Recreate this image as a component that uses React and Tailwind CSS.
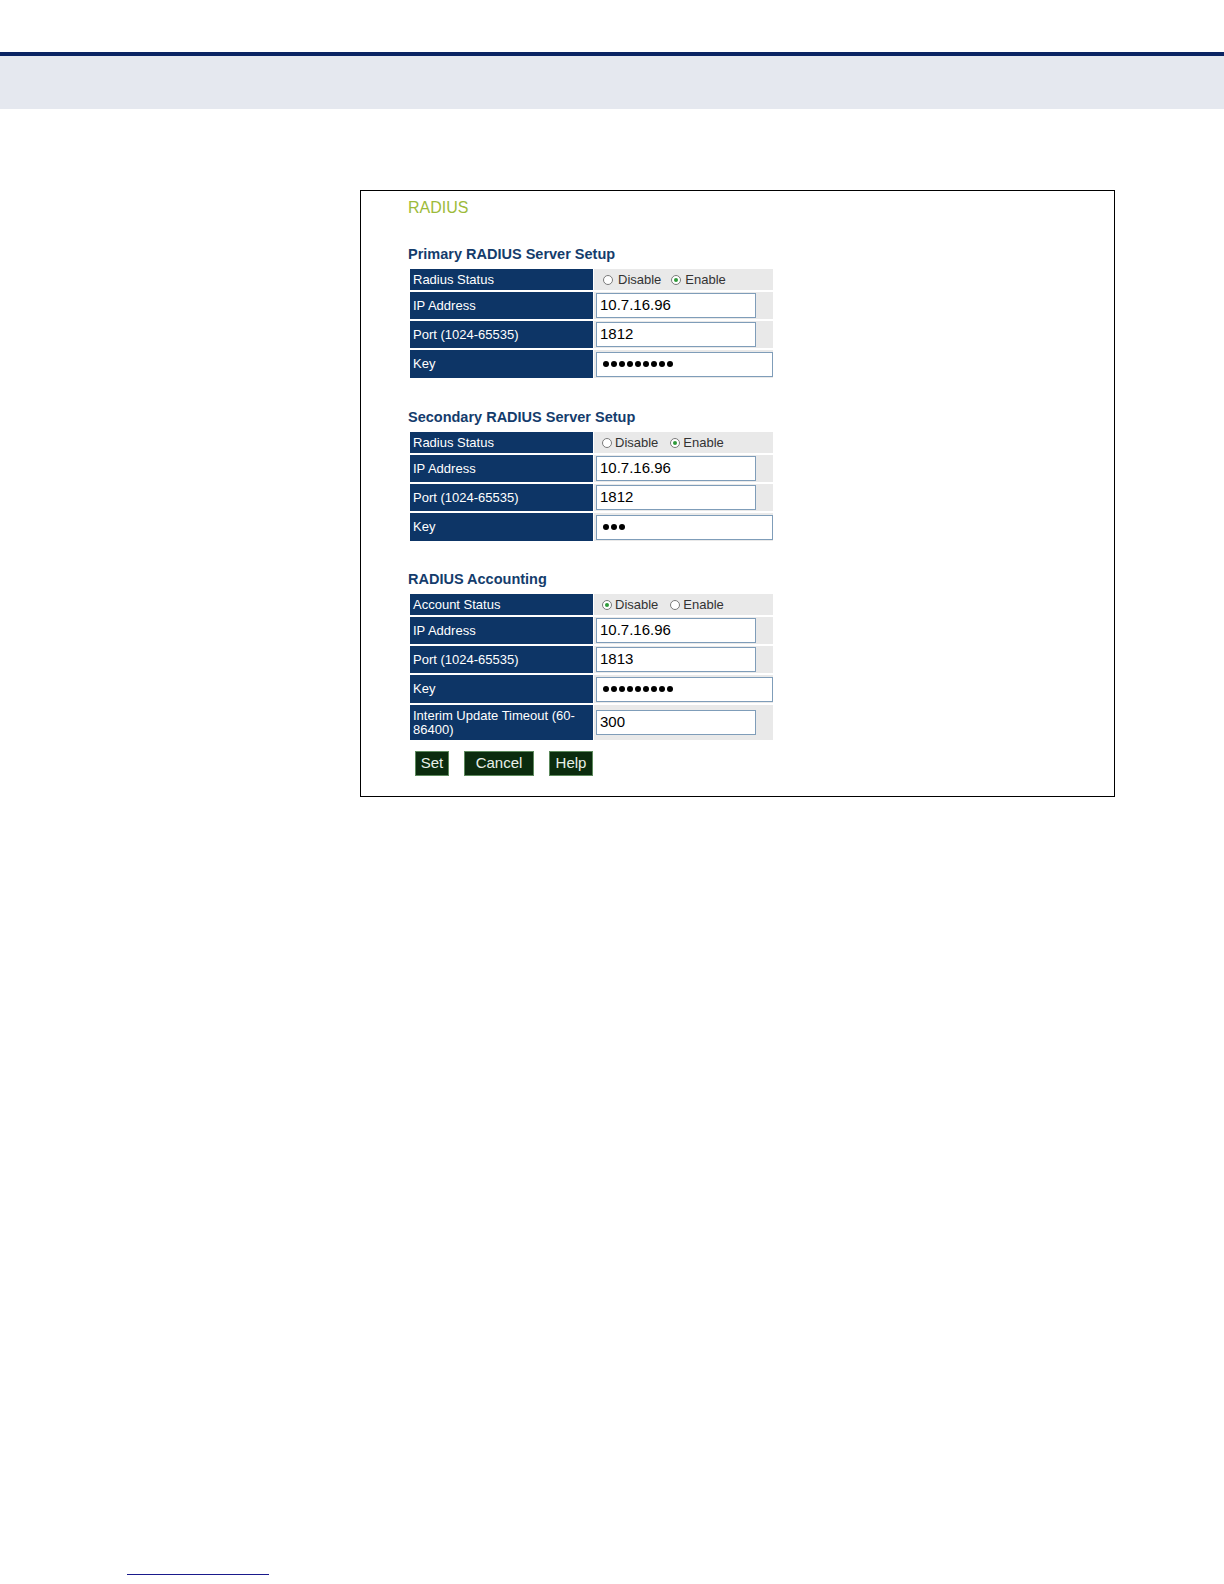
import React from "react";

const F = { fontFamily: '"Liberation Sans", Arial, sans-serif' };

function Radio({ checked }) {
  return (
    <span className="flex items-center justify-center w-[10px] h-[10px] rounded-full border border-[#7a7a7a] bg-white shrink-0">
      {checked && <span className="w-[4px] h-[4px] rounded-full bg-[#2f9a3a]" />}
    </span>
  );
}

function Dots({ n }) {
  return (
    <span className="flex items-center gap-[2px]">
      {Array.from({ length: n }).map((_, i) => (
        <span key={i} className="w-[6px] h-[6px] rounded-full bg-black" />
      ))}
    </span>
  );
}

function Label({ children, h }) {
  return (
    <div className={`w-[183px] bg-[#0d3566] text-white text-[13px] leading-[14px] pl-[3px] flex items-center ${h}`}>
      {children}
    </div>
  );
}

function InputRow({ label, value, wide, dots, h = "h-[27px]" }) {
  return (
    <div className="flex gap-[1px]">
      <Label h={h}>{label}</Label>
      <div className={`w-[179px] bg-[#e9e9e9] flex items-center ${h}`}>
        <div
          className={`ml-[2px] h-[25px] bg-white border border-[#7f9db9] flex items-center pl-[3px] text-[15px] text-black ${wide ? "w-[177px]" : "w-[160px]"}`}
        >
          {dots ? <span className="pl-[3px]"><Dots n={dots} /></span> : value}
        </div>
      </div>
    </div>
  );
}

function StatusRow({ label, enableChecked, spaced }) {
  return (
    <div className="flex gap-[1px]">
      <Label h="h-[21px]">{label}</Label>
      <div className="w-[179px] h-[21px] bg-[#e9e9e9] flex items-center text-[13px] text-[#333]">
        {spaced ? (
          <>
            <span className="ml-[9px] flex items-center"><Radio checked={!enableChecked} /></span>
            <span className="ml-[5px]">Disable</span>
            <span className="ml-[10px] flex items-center"><Radio checked={enableChecked} /></span>
            <span className="ml-[4px]">Enable</span>
          </>
        ) : (
          <>
            <span className="ml-[8px] flex items-center"><Radio checked={!enableChecked} /></span>
            <span className="ml-[3px]">Disable</span>
            <span className="ml-[12px] flex items-center"><Radio checked={enableChecked} /></span>
            <span className="ml-[3px]">Enable</span>
          </>
        )}
      </div>
    </div>
  );
}

function Heading({ children, mt }) {
  return (
    <div className={`text-[14.5px] leading-[17px] font-bold text-[#143c6c] mb-[6px] ${mt}`}>{children}</div>
  );
}

function Btn({ children, w }) {
  return (
    <div className={`h-[25px] ${w} bg-[#0b2c0e] border border-[#5d8a5d] text-[#e8f0e8] text-[15px] flex items-center justify-center`}>
      {children}
    </div>
  );
}

export default function App() {
  return (
    <div className="w-[1224px] h-[1584px] bg-white overflow-hidden" style={F}>
      <div className="h-[52px]" />
      <div className="h-[4px] bg-[#0a2463]" />
      <div className="h-[53px] bg-[#e5e8ef]" />
      <div className="ml-[360px] mt-[81px] w-[755px] h-[607px] border border-black pl-[47px] pt-[8px]">
        <div className="text-[16px] leading-[18px] text-[#9dbb3a]">RADIUS</div>

        <Heading mt="mt-[29px]">Primary RADIUS Server Setup</Heading>
        <div className="flex flex-col gap-[2px] ml-[2px]">
          <StatusRow label="Radius Status" spaced enableChecked />
          <InputRow label="IP Address" value="10.7.16.96" />
          <InputRow label="Port (1024-65535)" value="1812" />
          <InputRow label="Key" wide dots={9} h="h-[28px]" />
        </div>

        <Heading mt="mt-[31px]">Secondary RADIUS Server Setup</Heading>
        <div className="flex flex-col gap-[2px] ml-[2px]">
          <StatusRow label="Radius Status" enableChecked />
          <InputRow label="IP Address" value="10.7.16.96" />
          <InputRow label="Port (1024-65535)" value="1812" />
          <InputRow label="Key" wide dots={3} h="h-[28px]" />
        </div>

        <Heading mt="mt-[30px]">RADIUS Accounting</Heading>
        <div className="flex flex-col gap-[2px] ml-[2px]">
          <StatusRow label="Account Status" enableChecked={false} />
          <InputRow label="IP Address" value="10.7.16.96" />
          <InputRow label="Port (1024-65535)" value="1813" />
          <InputRow label="Key" wide dots={9} h="h-[28px]" />
          <InputRow label={<span>Interim Update Timeout (60-<br />86400)</span>} value="300" h="h-[35px]" />
        </div>

        <div className="flex gap-[15px] ml-[7px] mt-[11px]">
          <Btn w="w-[34px]">Set</Btn>
          <Btn w="w-[70px]">Cancel</Btn>
          <Btn w="w-[44px]">Help</Btn>
        </div>
      </div>
      <div className="ml-[127px] mt-[777px] w-[142px] h-px bg-[#1a1a8c]" />
    </div>
  );
}
